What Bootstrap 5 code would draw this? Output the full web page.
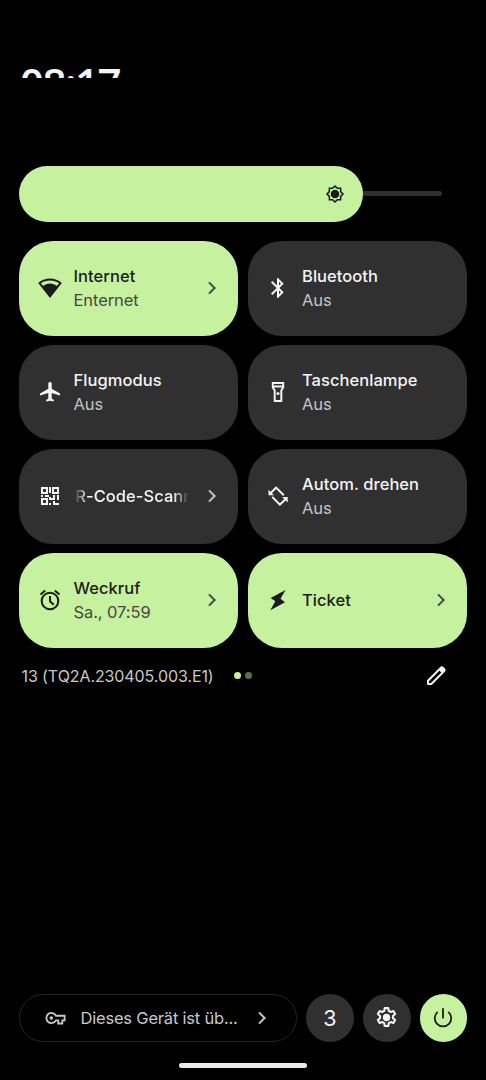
<!DOCTYPE html>
<html lang="de">
<head>
<meta charset="utf-8">
<meta name="viewport" content="width=device-width, initial-scale=1">
<title>Schnelleinstellungen</title>
<link href="https://cdn.jsdelivr.net/npm/bootstrap@5.3.0/dist/css/bootstrap.min.css" rel="stylesheet">
<style>
  :root { --lime:#c6f19f; --panel:#303030; }
  body { background:#000; color:#f4f4f4; font-family:Inter,Roboto,sans-serif; font-size:16.5px; }
  .shade { height:1080px; padding:0 19px; overflow:hidden; }
  .clock { margin-top:60px; height:18px; padding-left:1px; overflow:hidden; font-family:"Open Sans",sans-serif; font-size:42px; font-weight:600; line-height:46px; letter-spacing:-1.5px; }
  .brightness { margin-top:87.5px; height:56.5px; }
  .level { width:344px; height:56.5px; border-radius:29px; background:var(--lime); padding-right:16px; color:#1b1b1b; }
  .rail { width:78.5px; height:5px; background:var(--panel); border-radius:0 3px 3px 0; }
  .tiles { display:grid; grid-template-columns:219px 219px; grid-auto-rows:94.5px; gap:9.5px; margin-top:19px; }
  .tile { background:var(--panel); border-radius:34px; padding:0 14px 0 18.5px; }
  .tile > svg { width:24px; height:24px; flex:none; }
  .tile .caption { margin-left:12px; width:116px; white-space:nowrap; line-height:24.5px; }
  .tile .caption div:first-child { font-weight:500; letter-spacing:.05px; }
  .tile .state { color:#c4c4c4; letter-spacing:-.08px; }
  .tile.on { background:var(--lime); color:#1b1b1b; }
  .tile.on .state { color:#474747; }
  .tile .chev, .notice .chev { width:24px; height:24px; margin-left:auto; flex:none; color:#c8c8c8; }
  .tile.on .chev { color:#474747; }
  .marquee { overflow:hidden; -webkit-mask-image:linear-gradient(90deg,transparent,#000 12%,#000 86%,transparent 99%); mask-image:linear-gradient(90deg,transparent,#000 12%,#000 86%,transparent 99%); }
  .marquee div { margin-left:-11px; }
  .build { height:56px; padding-left:2.5px; color:#c8c8c8; font-size:16px; letter-spacing:-.09px; }
  .build > span { width:212px; white-space:nowrap; }
  .dot { width:7px; height:7px; border-radius:50%; background:var(--lime); margin-right:4px; }
  .dot.dim { background:#5c7048; margin:0; }
  .pencil { margin-right:19px; color:#f4f4f4; }
  .footer-bar { height:48px; margin-top:290.5px; gap:9px; }
  .notice { width:278px; height:47.5px; flex:none; border:1px solid #242424; border-radius:24px; padding:0 22.5px 0 24px; color:#c8c8c8; }
  .notice span { margin-left:14.5px; white-space:nowrap; letter-spacing:-.2px; }
  .round { width:47.8px; height:47.8px; border-radius:50%; background:var(--panel); flex:none; }
  .count { font-size:21.5px; }
  .power { background:var(--lime); color:#1b1b1b; }
  .home-pill { width:128px; height:5px; border-radius:3px; background:#e9e9e9; margin:21px auto 0 160px; }
  svg { display:block; fill:currentColor; }
  .ln { fill:none; stroke:currentColor; stroke-width:2; }
</style>
</head>
<body>
<svg width="0" height="0" class="position-absolute"><defs>
  <symbol id="chev" viewBox="0 0 24 24"><path class="ln" d="M9 6.400l5.600 5.600L9 17.600"/></symbol>
</defs></svg>
<main class="shade">
  <div class="clock">08:17</div>
  <div class="brightness d-flex align-items-center">
    <div class="level d-flex align-items-center justify-content-end">
      <svg width="24" height="24" viewBox="0 0 24 24"><path fill="none" stroke="currentColor" stroke-width="1.500" d="M12 4l2.350 2.350h3.300v3.300L20 12l-2.350 2.350v3.300h-3.300L12 20l-2.350-2.350h-3.300v-3.300L4 12l2.350-2.350v-3.300h3.300z"/><circle cx="12" cy="12" r="4.300"/></svg>
    </div>
    <div class="rail"></div>
  </div>
  <section class="tiles">
    <div class="tile on d-flex align-items-center">
      <svg viewBox="0 0 24 24"><path d="M12 2.500C7.500 2.500 3.300 4.100.2 7L12 22 23.800 7C20.700 4.100 16.500 2.500 12 2.500zm0 1.900c3.400 0 6.500 1 9.100 2.800l-2.200 2.800C17 8.500 14.600 7.600 12 7.600S7 8.500 5.100 10L2.900 7.200C5.500 5.400 8.600 4.400 12 4.400z"/></svg>
      <div class="caption"><div>Internet</div><div class="state">Enternet</div></div>
      <svg class="chev"><use href="#chev"/></svg>
    </div>
    <div class="tile d-flex align-items-center">
      <svg viewBox="0 0 24 24"><path d="M17.710 7.710L12 2h-1v7.590L6.410 5 5 6.410 10.590 12 5 17.590 6.410 19 11 14.410V22h1l5.710-5.710-4.300-4.290 4.300-4.290zM13 5.830l1.880 1.880L13 9.590V5.830zm1.880 10.460L13 18.170v-3.760l1.880 1.880z"/></svg>
      <div class="caption"><div>Bluetooth</div><div class="state">Aus</div></div>
    </div>
    <div class="tile d-flex align-items-center">
      <svg viewBox="0 0 24 24"><path d="M22 15.500v-2L13.700 8.700V3.500C13.700 2.600 12.900 2 12 2s-1.700.6-1.700 1.500v5.200L2 13.500v2l8.300-2.500v5.500L8.200 20v1.600l3.800-.9 3.800.9V20l-2.100-1.500V13z"/></svg>
      <div class="caption"><div>Flugmodus</div><div class="state">Aus</div></div>
    </div>
    <div class="tile d-flex align-items-center">
      <svg viewBox="0 0 24 24"><path class="ln" d="M6.800 3h10.400v4.500L15.300 10.500V21H8.700V10.500L6.800 7.500zM7 6.500h10"/><circle cx="12" cy="13.500" r="1.500"/></svg>
      <div class="caption"><div>Taschenlampe</div><div class="state">Aus</div></div>
    </div>
    <div class="tile d-flex align-items-center">
      <svg viewBox="0 0 24 24"><path class="ln" d="M4 4h5v5H4zM15 4h5v5h-5zM4 15h5v5H4z"/><path d="M11 3h2v6h-2zM3 11h2v2H3zM7 11h4v2H7zM11 13h2v3h-2zM15 11h2v3h-2zM13 14h4v2h-4zM19 11h2v5h-2zM11 19h2v2h-2zM15 17h2v2h4v2h-6z"/></svg>
      <div class="caption marquee"><div>QR-Code-Scanner</div></div>
      <svg class="chev"><use href="#chev"/></svg>
    </div>
    <div class="tile d-flex align-items-center">
      <svg viewBox="0 0 24 24"><path class="ln" d="M4.500 9.200L10.100 3.600l7.700 7.700M19.700 15L13.900 20.600l-7.700-7.700"/><path d="M2.500 5.700v5.500H8zM21.700 18.600v-5.500h-5.500z"/></svg>
      <div class="caption"><div>Autom. drehen</div><div class="state">Aus</div></div>
    </div>
    <div class="tile on d-flex align-items-center">
      <svg viewBox="0 0 24 24"><circle class="ln" cx="12" cy="13" r="8.300"/><path class="ln" d="M2.500 6.500l4.700-4M21.500 6.500l-4.700-4M12 8v5.200l3.700 3.500"/></svg>
      <div class="caption"><div>Weckruf</div><div class="state">Sa., 07:59</div></div>
      <svg class="chev"><use href="#chev"/></svg>
    </div>
    <div class="tile on d-flex align-items-center">
      <svg viewBox="0 0 24 24"><path d="M19.500 2L4.700 10l4.600 3.300L4.300 22.300 19 14.200l-4.500-3.400z"/></svg>
      <div class="caption"><div>Ticket</div></div>
      <svg class="chev"><use href="#chev"/></svg>
    </div>
  </section>
  <div class="build d-flex align-items-center">
    <span>13 (TQ2A.230405.003.E1)</span>
    <i class="dot"></i><i class="dot dim"></i>
    <svg class="pencil ms-auto" width="24" height="24" viewBox="0 0 24 24"><path class="ln" stroke-linejoin="round" d="M4 20v-3.300L16.900 3.800q.9-.9 1.800 0l1.500 1.500q.9.900 0 1.800L7.300 20z"/><path d="M14.500 5.800l3.700 3.700L21 6.700 17.300 3z"/></svg>
  </div>
  <div class="footer-bar d-flex align-items-center">
    <div class="notice d-flex align-items-center">
      <svg width="22" height="22" viewBox="0 0 24 24"><path class="ln" d="M13 9.500A5.500 5.500 0 1 0 13 14.500h2.500V18h4.500v-3.500h2.500v-5z"/><circle cx="8" cy="12" r="2"/></svg>
      <span>Dieses Gerät ist üb...</span>
      <svg class="chev"><use href="#chev"/></svg>
    </div>
    <div class="round count d-flex align-items-center justify-content-center">3</div>
    <div class="round d-flex align-items-center justify-content-center">
      <svg width="25" height="25" viewBox="0 0 24 24"><path class="ln" stroke-linejoin="round" d="M10.300 3h3.400l.5 2.700 1.800 1 2.600-.9 1.700 2.900-2.100 1.800v2.100l2.100 1.800-1.700 2.900-2.600-.9-1.800 1-.5 2.700h-3.400l-.5-2.700-1.800-1-2.600.9-1.700-2.900 2.100-1.800v-2.100L3.700 8.700l1.700-2.900 2.600.9 1.800-1z"/><circle cx="12" cy="12" r="3.500"/></svg>
    </div>
    <div class="round power d-flex align-items-center justify-content-center">
      <svg width="24" height="24" viewBox="0 0 24 24"><path fill="none" stroke="currentColor" stroke-width="1.800" d="M12 2.200V12.500M6.700 5.900a8.200 8.200 0 1 0 10.600 0"/></svg>
    </div>
  </div>
  <div class="home-pill"></div>
</main>
<script src="https://cdn.jsdelivr.net/npm/bootstrap@5.3.0/dist/js/bootstrap.bundle.min.js"></script>
</body>
</html>
